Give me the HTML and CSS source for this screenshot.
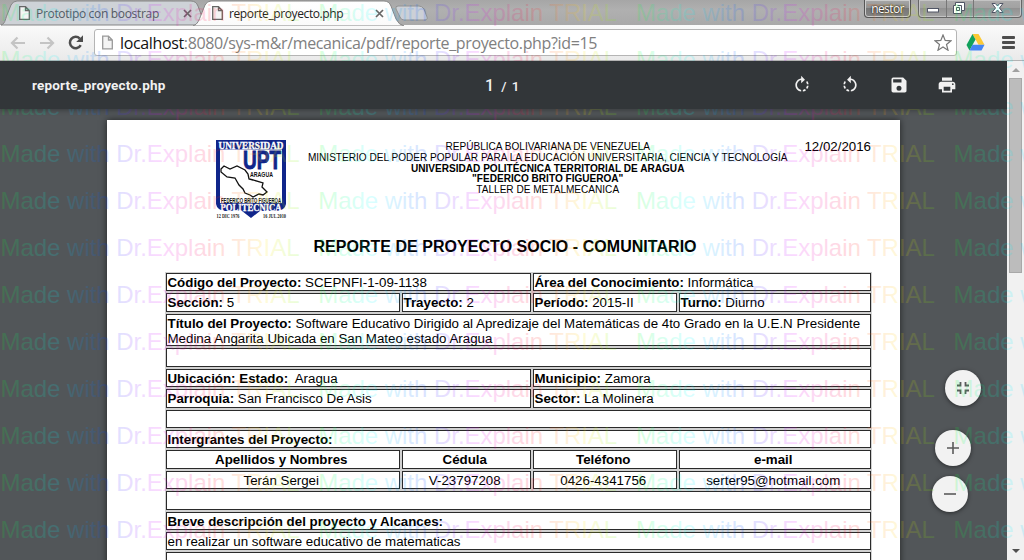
FILE: index.html
```html
<!DOCTYPE html>
<html lang="es">
<head>
<meta charset="utf-8">
<title>reporte_proyecto.php</title>
<link rel="stylesheet" href="styles.css">
</head>
<body>
<div class="window">
  <header class="tabstrip">
    <svg class="tabshapes" width="440" height="26" viewBox="0 0 440 26">
      <defs><linearGradient id="tabfill" x1="0" y1="0" x2="0" y2="1"><stop offset="0" stop-color="#fff"/><stop offset="1" stop-color="#fafafa"/></linearGradient></defs>
      <path d="M1 25C5 24 5 20 7 15L11 5Q13 1 17 1H191Q196 1 198 6L205 25Z" fill="#ced2d7" stroke="#858585"/>
      <path d="M398 6H419Q422 6 424 9L427 17Q428 20 424 20H404Q401 20 400 17L396 9Q395 6 398 6Z" fill="#ccd0d6" stroke="#929292"/>
      <path d="M193 26C198 24 199 20 201 15L205 5Q207 1 211 1H384Q389 1 391 6L396 19Q399 25 404 26Z" fill="url(#tabfill)" stroke="#858585"/>
    </svg>
    <div class="tab tab-back"><svg class="doc" viewBox="0 0 11 14"><path d="M.7.7H6.5L10.3 4.5V13.3H.7ZM6.5.7V4.5H10.3"/></svg><span class="t1">Prototipo con boostrap</span><svg class="close" viewBox="0 0 9 9"><path d="M1 1L8 8M8 1L1 8"/></svg></div>
    <div class="tab tab-front"><svg class="doc" viewBox="0 0 11 14"><path d="M.7.7H6.5L10.3 4.5V13.3H.7ZM6.5.7V4.5H10.3"/></svg><span class="t2">reporte_proyecto.php</span><svg class="close" viewBox="0 0 9 9"><path d="M1 1L8 8M8 1L1 8"/></svg></div>
    <div class="user">nestor</div>
    <div class="wincontrols">
      <span class="wc wc-min"><svg width="14" height="7"><rect x="1.5" y="1.5" width="11" height="3.5" fill="#fff" stroke="#505565"/></svg></span>
      <span class="wc wc-max"><svg width="12" height="12"><path d="M2.500.5H11.500V8.500H8.500V11.500H.5V3.500H2.500Z" fill="#fff" stroke="#505565"/><path d="M4.500 3.500H8.500V8.500M3.500 5.500H6.500V8.500H3.500Z" fill="none" stroke="#505565"/></svg></span>
      <span class="wc wc-close"><svg width="13" height="11"><path d="M1 .5H4.3L6.5 3L8.700 .5H12L8.500 5L12 9.500H8.700L6.500 7L4.300 9.500H1L4.500 5Z" fill="#fff" stroke="#505565"/></svg></span>
    </div>
  </header>
  <nav class="toolbar">
    <svg class="arrow" viewBox="0 0 16 14"><path d="M15 7H2M7.500 1.500L2 7L7.500 12.500"/></svg>
    <svg class="arrow" viewBox="0 0 16 14"><path d="M1 7H14M8.500 1.500L14 7L8.500 12.500"/></svg>
    <svg class="reload" viewBox="0 0 16 15"><path d="M12.700 10.200A5.700 5.700 0 1 1 11.800 3.600" fill="none" stroke="#4d4d4d" stroke-width="2.500"/><path d="M15 .2V7H8.200Z" fill="#4d4d4d"/></svg>
    <div class="omnibox">
      <svg class="doc pale" viewBox="0 0 11 14"><path d="M.7.7H6.500L10.300 4.500V13.300H.7ZM6.500.7V4.500H10.300"/></svg>
      <span class="url"><b>localhost</b>:8080/sys-m&amp;r/mecanica/pdf/reporte_proyecto.php?id=15</span>
      <svg class="star" viewBox="0 0 18 17"><path d="M9 1L11.200 6.400L17 6.800L12.500 10.500L14 16.200L9 13L4 16.200L5.500 10.500L1 6.800L6.800 6.400Z"/></svg>
    </div>
    <svg class="drive" viewBox="0 0 18 17"><path d="M6 0H12L18 10.700H12Z" fill="#fcc934"/><path d="M6 0L9 5.400L3 16.500L0 11Z" fill="#11a15c"/><path d="M6 10.700H18L15 16.500H3Z" fill="#4385f5"/></svg>
    <span class="menu"><i></i><i></i><i></i></span>
  </nav>
  <main class="viewer">
    <section class="content">
      <div class="pdfbar">
        <span class="filename">reporte_proyecto.php</span>
        <span class="pages"><span>1</span> / 1</span>
        <span class="tools">
          <svg viewBox="0 0 24 24"><path d="M15.550 5.550L11 1v3.070C7.060 4.560 4 7.920 4 12s3.050 7.440 7 7.930v-2.020c-2.840-.48-5-2.940-5-5.910s2.160-5.430 5-5.910V10l4.550-4.450zM19.930 11c-.17-1.390-.72-2.730-1.620-3.890l-1.420 1.420c.54.750.88 1.600 1.020 2.470h2.020zM13 17.900v2.020c1.390-.17 2.740-.71 3.900-1.610l-1.440-1.440c-.75.54-1.590.89-2.460 1.030zm3.890-2.420l1.420 1.410c.9-1.160 1.450-2.500 1.620-3.890h-2.020c-.14.870-.48 1.720-1.020 2.480z"/></svg>
          <svg viewBox="0 0 24 24"><path transform="translate(24)scale(-1 1)" d="M15.550 5.550L11 1v3.070C7.060 4.560 4 7.920 4 12s3.050 7.440 7 7.930v-2.020c-2.840-.48-5-2.940-5-5.910s2.160-5.430 5-5.910V10l4.550-4.450zM19.930 11c-.17-1.390-.72-2.730-1.620-3.890l-1.420 1.420c.54.750.88 1.600 1.020 2.470h2.020zM13 17.900v2.020c1.390-.17 2.740-.71 3.900-1.610l-1.440-1.440c-.75.54-1.590.89-2.460 1.030zm3.890-2.420l1.420 1.410c.9-1.160 1.450-2.500 1.620-3.890h-2.020c-.14.870-.48 1.720-1.020 2.480z"/></svg>
          <svg viewBox="0 0 24 24"><path d="M17 3H5a2 2 0 0 0-2 2v14a2 2 0 0 0 2 2h14c1.100 0 2-.9 2-2V7l-4-4zm-5 16a3 3 0 1 1 0-6 3 3 0 0 1 0 6zm3-10H5V5h10v4z"/></svg>
          <svg viewBox="0 0 24 24"><path d="M19 8H5c-1.660 0-3 1.340-3 3v6h4v4h12v-4h4v-6c0-1.660-1.340-3-3-3zm-3 11H8v-5h8v5zm3-7a1 1 0 1 1 0-2 1 1 0 0 1 0 2zm-1-9H6v4h12V3z"/></svg>
        </span>
      </div>
      <article class="page">
        <div class="heading">
          <svg class="crest" viewBox="0 0 72 80">
            <path d="M1 0H71V64Q70 70 62 71H45L36 78L27 71H10Q2 70 1 64Z" fill="#10258a"/>
            <path d="M5 9.500H67V63H5Z" fill="#fff"/>
            <text x="47" y="28.500" class="crest-upt" textLength="38" lengthAdjust="spacingAndGlyphs">UPT</text>
            <text x="36" y="8.500" class="crest-serif" textLength="65" lengthAdjust="spacingAndGlyphs">UNIVERSIDAD</text>
            <text x="46.500" y="36.500" class="crest-small" textLength="23" lengthAdjust="spacingAndGlyphs">ARAGUA</text>
            <path d="M6 29L9 26L15 29L22 26L30 30L33 34L34 39L38 40L48 43L47 47L52 52L48 55L44 54L38 57L35 55L30 53L28 49L24 45L20 38L12 37L6 32Z" fill="#fff" stroke="#111" stroke-width="1.300"/>
            <text x="36" y="62.500" class="crest-small" textLength="60" lengthAdjust="spacingAndGlyphs">FEDERICO BRITO FIGUEROA</text>
            <text x="36" y="70.500" class="crest-serif" textLength="61" lengthAdjust="spacingAndGlyphs">POLITECNICA</text>
            <text x="13" y="77.500" class="crest-date" textLength="23" lengthAdjust="spacingAndGlyphs">12 DIC 1976</text>
            <text x="59.500" y="77.500" class="crest-date" textLength="23" lengthAdjust="spacingAndGlyphs">16 JUL 2010</text>
          </svg>
          <div class="institution">
            <p>REPÚBLICA BOLIVARIANA DE VENEZUELA</p>
            <p>MINISTERIO DEL PODER POPULAR PARA LA EDUCACIÓN UNIVERSITARIA, CIENCIA Y TECNOLOGÍA</p>
            <p><b>UNIVERSIDAD POLITÉCNICA TERRITORIAL DE ARAGUA</b></p>
            <p><b>"FEDERICO BRITO FIGUEROA"</b></p>
            <p>TALLER DE METALMECANICA</p>
          </div>
          <time>12/02/2016</time>
        </div>
        <h1>REPORTE DE PROYECTO SOCIO - COMUNITARIO</h1>
        <div class="report">
          <div class="half"><b>Código del Proyecto:</b> SCEPNFI-1-09-1138</div><div class="half"><b>Área del Conocimiento:</b> Informática</div>
          <div><b>Sección:</b> 5</div><div><b>Trayecto:</b> 2</div><div><b>Período:</b> 2015-II</div><div><b>Turno:</b> Diurno</div>
          <div class="full"><b>Título del Proyecto:</b> Software Educativo Dirigido al Apredizaje del Matemáticas de 4to Grado en la U.E.N Presidente<br>Medina Angarita Ubicada en San Mateo estado Aragua</div>
          <div class="full"></div>
          <div class="half"><b>Ubicación: Estado:</b>&nbsp; Aragua</div><div class="half"><b>Municipio:</b> Zamora</div>
          <div class="half"><b>Parroquia:</b> San Francisco De Asis</div><div class="half"><b>Sector:</b> La Molinera</div>
          <div class="full"></div>
          <div class="full"><b>Intergrantes del Proyecto:</b></div>
          <div class="mid"><b>Apellidos y Nombres</b></div><div class="mid"><b>Cédula</b></div><div class="mid"><b>Teléfono</b></div><div class="mid"><b>e-mail</b></div>
          <div class="mid">Terán Sergei</div><div class="mid">V-23797208</div><div class="mid">0426-4341756</div><div class="mid">serter95@hotmail.com</div>
          <div class="full"></div>
          <div class="full"><b>Breve descripción del proyecto y Alcances:</b></div>
          <div class="full">en realizar un software educativo de matematicas</div>
          <div class="full"></div>
        </div>
      </article>
      <div class="zoomer">
        <button class="fit"><svg viewBox="0 0 14 14"><path d="M1 4.500H4.500V1M13 4.500H9.500V1M1 9.500H4.500V13M13 9.500H9.500V13" stroke-width="1.800"/></svg></button>
        <button class="plus"><svg viewBox="0 0 14 14"><path d="M1 7H13M7 1V13" stroke-width="1.600"/></svg></button>
        <button class="minus"><svg viewBox="0 0 14 14"><path d="M1 7H13" stroke-width="1.600"/></svg></button>
      </div>
    </section>
    <aside class="scrollbar"><i class="up"></i><i class="thumb"></i><i class="down"></i></aside>
  </main>
  <svg class="watermark" width="1024" height="560">
    <defs>
      <linearGradient id="hues" gradientUnits="userSpaceOnUse" x1="0" y1="0" x2="317.700" y2="0">
        <stop offset="0" stop-color="#00ff20"/><stop offset=".167" stop-color="#00ffff"/><stop offset=".333" stop-color="#0040ff"/><stop offset=".5" stop-color="#e000ff"/><stop offset=".667" stop-color="#ff0020"/><stop offset=".833" stop-color="#ffe000"/><stop offset="1" stop-color="#20ff00"/>
      </linearGradient>
    </defs>
  </svg>
</div>
<script src="watermark.js"></script>
</body>
</html>
```
FILE: watermark.js
```js
const NS = 'http://www.w3.org/2000/svg';
const layer = document.querySelector('.watermark');
for (let row = 0; row < 12; row++) {
  for (let col = 0; col < 4; col++) {
    const t = document.createElementNS(NS, 'text');
    t.setAttribute('transform', `translate(${col * 317.7 + 0.5} ${21 + row * 47})`);
    t.setAttribute('textLength', '299');
    t.textContent = 'Made with Dr.Explain TRIAL';
    layer.appendChild(t);
  }
}
```
FILE: styles.css
```css
* { box-sizing: border-box; }
body { margin: 0; font-family: "Liberation Sans", Arial, sans-serif; }
p, h1 { margin: 0; }
.window { position: relative; width: 1024px; height: 560px; overflow: hidden; display: flex; flex-direction: column; }
.watermark { position: absolute; inset: 0; pointer-events: none; }
.watermark text { font-size: 24px; fill: url(#hues); fill-opacity: .15; }

.tabstrip { position: relative; flex: none; height: 25px; display: flex; background: linear-gradient(#a6a6a6, #b0b0b0 40%, #a9a9a9); font-family: "Open Sans", "Noto Sans", sans-serif; font-size: 12px; }
.tabshapes { position: absolute; left: 0; top: 0; }
.tab { position: relative; display: flex; align-items: center; height: 26px; }
.tab-back { width: 193px; padding-left: 19px; color: #555a62; }
.tab-front { width: 211px; padding-left: 19px; color: #222; }
.tab span { white-space: nowrap; }
.t1 { width: 144px; margin-left: 6px; letter-spacing: -.32px; }
.t2 { width: 143px; margin-left: 6px; letter-spacing: -.39px; }
.doc { width: 11px; height: 14px; flex: none; fill: #f4f4f4; stroke: #666; stroke-width: 1.300; }
.close { width: 9px; height: 9px; margin-left: 3px; stroke: #666; stroke-width: 1.700; }
.user { margin-left: auto; width: 47px; height: 18px; border: 1px solid #555; border-top: 0; border-radius: 0 0 4px 4px; background: linear-gradient(#a8a8a8, #929292 45%, #777 50%, #858585); box-shadow: inset 0 0 0 1px #ccc; color: #fff; text-shadow: 0 0 2px #222, 0 0 2px #222; line-height: 17px; text-align: center; letter-spacing: -.6px; }
.wincontrols { display: flex; width: 104px; height: 18px; margin: 0 2px 0 7px; border: 1px solid #666; border-top: 0; border-radius: 0 0 4px 4px; background: linear-gradient(#aaa, #a2a2a2 45%, #929292 50%, #a4a4a4); box-shadow: inset 0 0 0 1px #c4c4c4; }
.wc { display: flex; align-items: center; justify-content: center; border-right: 1px solid #777; }
.wc-min { width: 28px; padding-top: 4px; }
.wc-max { width: 27px; padding-right: 3px; padding-bottom: 1px; }
.wc-close { flex: 1; border: 0; }

.toolbar { flex: none; height: 36px; display: flex; align-items: center; padding: 0 9px 0 10px; background: linear-gradient(#fafafa, #eaeaea); border-bottom: 1px solid #b3b3b3; }
.arrow { width: 16px; height: 14px; margin-right: 13px; fill: none; stroke: #c4c4c4; stroke-width: 2.200; }
.reload { width: 16px; height: 15px; }
.omnibox { display: flex; align-items: center; width: 863px; height: 27px; margin-left: 10px; padding: 0 4px 0 7px; background: #fff; border: 1px solid #b5b5b5; border-radius: 3px; }
.pale { stroke: #999; height: 15px; }
.url { flex: 1; margin-left: 7px; font: 16px "Open Sans", "Noto Sans", sans-serif; color: #808080; letter-spacing: -.36px; white-space: nowrap; }
.url b { font-weight: 400; color: #111; }
.star { width: 18px; height: 17px; fill: #fff; stroke: #777; stroke-width: 1.200; }
.drive { width: 19px; height: 17px; margin-left: 9px; }
.menu { display: flex; flex-direction: column; gap: 2px; margin-left: auto; }
.menu i { width: 13px; height: 3px; border-radius: 1px; background: #4d4d4d; }

.viewer { flex: 1; display: flex; min-height: 0; }
.content { position: relative; flex: 1; overflow: hidden; background: #525659; }
.pdfbar { position: relative; z-index: 1; display: flex; align-items: center; height: 48px; padding: 0 50px 0 32px; background: #323639; box-shadow: 0 1px 5px rgba(0,0,0,.35); color: #f1f1f1; font-family: Roboto, sans-serif; font-size: 13.500px; }
.filename { width: 453px; font-weight: 700; letter-spacing: .17px; }
.pages { font-weight: 500; letter-spacing: .9px; }
.pages span { font-size: 16px; margin-right: 2px; }
.tools { display: flex; gap: 28.500px; margin-left: auto; }
.tools svg { width: 20px; height: 20px; fill: #f1f1f1; }
.page { width: 793px; height: 900px; margin: 11px 0 0 107px; padding: 0 29px 0 59px; background: #fff; box-shadow: 0 0 7px rgba(0,0,0,.6); color: #000; }
.heading { display: flex; height: 116px; padding-top: 20px; }
.crest { width: 72px; height: 80px; margin-left: 49px; flex: none; }
.crest text { text-anchor: middle; }
.crest-serif { font: 700 9.500px "Liberation Serif", serif; fill: #fff; stroke: #fff; stroke-width: .3; }
.crest-upt { font: 700 25.500px "Liberation Sans", sans-serif; fill: #10258a; stroke: #10258a; stroke-width: .9; }
.crest-small { font: 700 7px "Liberation Sans", sans-serif; fill: #111; }
.crest-date { font: 700 5.500px "Liberation Serif", serif; fill: #222; }
.institution { width: 524px; margin-top: 2px; text-align: center; font-size: 10.070px; line-height: 10.800px; white-space: nowrap; }
time { font-size: 13.300px; line-height: 15px; margin-left: -4px; margin-top: -1px; }
h1 { height: 37px; padding-right: 27px; font-size: 16px; line-height: 21px; letter-spacing: .04px; text-align: center; white-space: nowrap; }
.report { display: grid; grid-template-columns: 234px 129px 144px 192px; grid-template-rows: 18.400px 18.400px 32.700px; grid-auto-rows: 18.400px; gap: 2px; font-size: 13.320px; line-height: 15px; white-space: nowrap; width: 705px; }
.report > div { border: 1px solid #2a2a2a; box-shadow: 0 0 0 1px rgba(0,0,0,.18); padding: 1px 0 0 .5px; }
.report .half { grid-column: span 2; }
.report .full { grid-column: 1 / -1; }
.report .mid { text-align: center; padding-right: 4px; }
.zoomer { position: absolute; right: 26px; top: 309px; display: flex; flex-direction: column; align-items: flex-end; }
.zoomer button { width: 36px; height: 36px; padding: 0; display: flex; align-items: center; justify-content: center; border: 0; border-radius: 50%; background: #f2f2f2; box-shadow: 0 1px 4px rgba(0,0,0,.5); }
.zoomer svg { width: 14px; height: 14px; fill: none; stroke: #5a5a5a; }
.plus { margin: 24px 10px 10px 0; }
.minus { margin-right: 13px; }
.scrollbar { flex: none; width: 17px; display: flex; flex-direction: column; align-items: center; background: #f1f1f1; }
.up { margin-top: 7px; border: 4px solid transparent; border-top: 0; border-bottom-color: #a0a0a0; }
.thumb { width: 13px; height: 195px; margin-top: 6px; background: #bcbcbc; border: 1px solid #a8a8a8; }
.down { margin: auto 0 7px; border: 4px solid transparent; border-bottom: 0; border-top-color: #505050; }
```
